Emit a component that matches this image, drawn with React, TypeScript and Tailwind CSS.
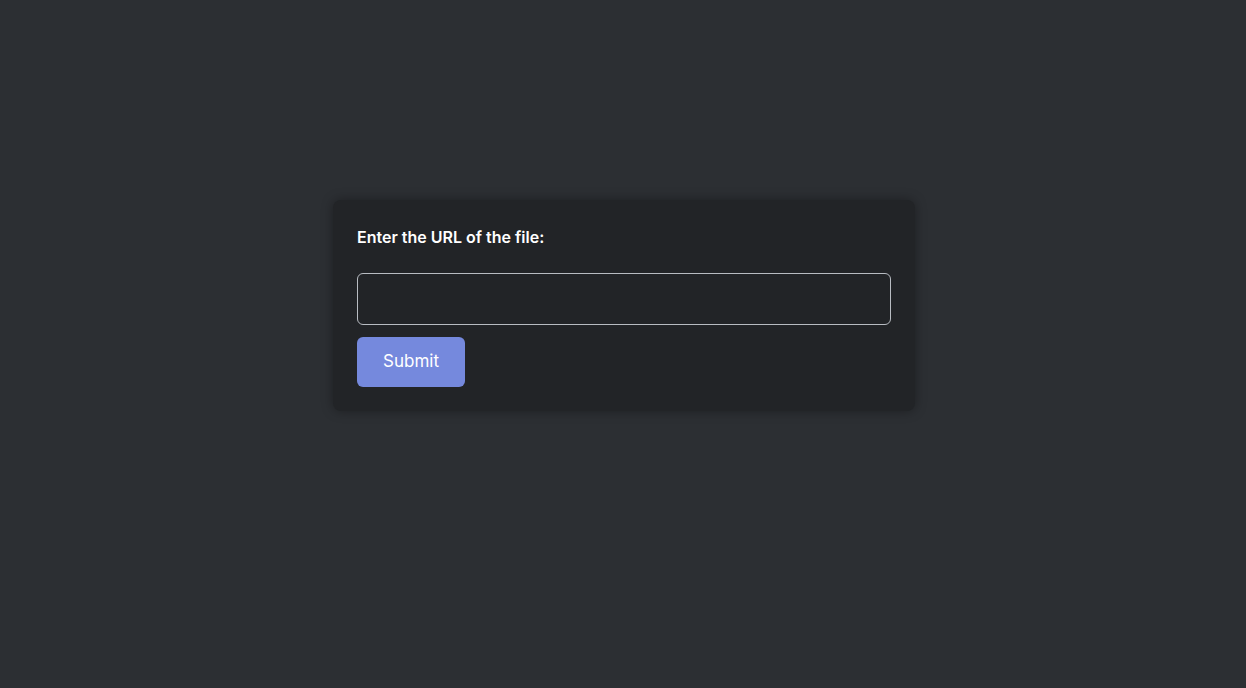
export default function App() {
  return (
    <div
      className="min-h-screen w-full bg-[#2c2f33] pt-[200px]"
      style={{ fontFamily: "Inter, 'Noto Sans', sans-serif" }}
    >
      <div className="mx-auto w-[582px] translate-x-px rounded-lg bg-[#222427] px-6 pt-[25px] pb-[24px] shadow-[0_0_12px_rgba(0,0,0,0.35)]">
        <form
          className="flex flex-col"
          onSubmit={(e) => e.preventDefault()}
        >
          <label
            htmlFor="url"
            className="block text-[16px] leading-6 font-semibold text-white"
          >
            Enter the URL of the file:
          </label>
          <input
            id="url"
            type="text"
            className="mt-6 h-[52px] w-full rounded-md border border-[#b8bcc2] bg-transparent px-3 text-white outline-none"
          />
          <div className="mt-3">
            <button
              type="submit"
              className="h-[50px] w-[108px] rounded-md bg-[#7589dd] text-[17px] text-white"
            >
              Submit
            </button>
          </div>
        </form>
      </div>
    </div>
  );
}
